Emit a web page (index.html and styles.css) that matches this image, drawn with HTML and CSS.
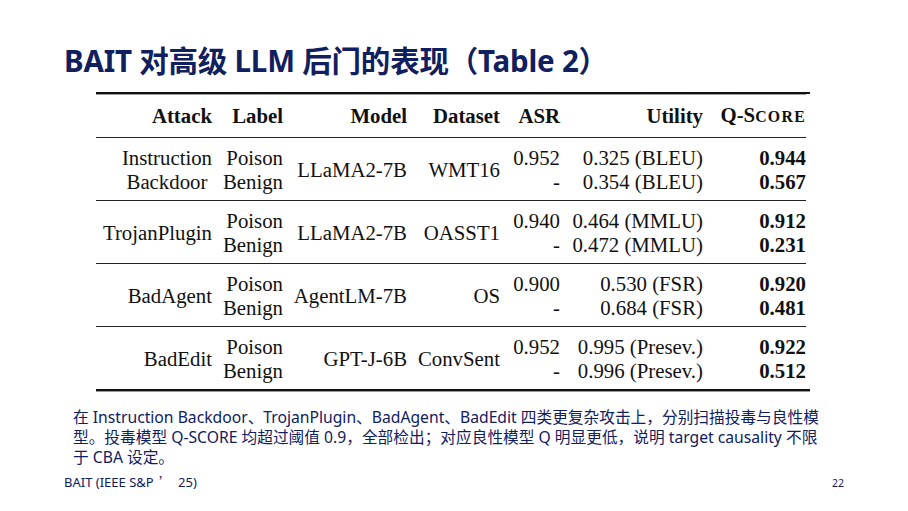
FILE: index.html
```html
<!DOCTYPE html>
<html lang="zh-CN">
<head>
<meta charset="utf-8">
<title>BAIT Table 2</title>
<link rel="stylesheet" href="styles.css">
</head>
<body>
<div class="slide">
  <h1 class="title">BAIT 对高级 LLM 后门的表现（Table 2）</h1>

  <div class="table">
    <div class="row head">
      <div class="c">Attack</div>
      <div class="c">Label</div>
      <div class="c">Model</div>
      <div class="c">Dataset</div>
      <div class="c">ASR</div>
      <div class="c">Utility</div>
      <div class="c">Q-S<span class="sc">CORE</span></div>
    </div>

    <div class="row">
      <div class="c"><span class="centered">Instruction<br>Backdoor</span></div>
      <div class="c two"><span>Poison</span><span>Benign</span></div>
      <div class="c">LLaMA2-7B</div>
      <div class="c">WMT16</div>
      <div class="c two"><span>0.952</span><span>-</span></div>
      <div class="c two"><span>0.325 (BLEU)</span><span>0.354 (BLEU)</span></div>
      <div class="c two bold"><span>0.944</span><span>0.567</span></div>
    </div>

    <div class="row">
      <div class="c">TrojanPlugin</div>
      <div class="c two"><span>Poison</span><span>Benign</span></div>
      <div class="c">LLaMA2-7B</div>
      <div class="c">OASST1</div>
      <div class="c two"><span>0.940</span><span>-</span></div>
      <div class="c two"><span>0.464 (MMLU)</span><span>0.472 (MMLU)</span></div>
      <div class="c two bold"><span>0.912</span><span>0.231</span></div>
    </div>

    <div class="row">
      <div class="c">BadAgent</div>
      <div class="c two"><span>Poison</span><span>Benign</span></div>
      <div class="c">AgentLM-7B</div>
      <div class="c">OS</div>
      <div class="c two"><span>0.900</span><span>-</span></div>
      <div class="c two"><span>0.530 (FSR)</span><span>0.684 (FSR)</span></div>
      <div class="c two bold"><span>0.920</span><span>0.481</span></div>
    </div>

    <div class="row last">
      <div class="c">BadEdit</div>
      <div class="c two"><span>Poison</span><span>Benign</span></div>
      <div class="c">GPT-J-6B</div>
      <div class="c">ConvSent</div>
      <div class="c two"><span>0.952</span><span>-</span></div>
      <div class="c two"><span>0.995 (Presev.)</span><span>0.996 (Presev.)</span></div>
      <div class="c two bold"><span>0.922</span><span>0.512</span></div>
    </div>
  </div>

  <p class="note">在 Instruction Backdoor、TrojanPlugin、BadAgent、BadEdit 四类更复杂攻击上，分别扫描投毒与良性模<br>型。投毒模型 Q-SCORE 均超过阈值 0.9，全部检出；对应良性模型 Q 明显更低，说明 target causality 不限<br>于 CBA 设定。</p>

  <div class="footer">
    <span class="source">BAIT (IEEE S&amp;P <span class="cjk">’</span>25)</span>
    <span class="page">22</span>
  </div>
</div>
</body>
</html>
```

FILE: styles.css
```css
html, body {
  margin: 0;
  padding: 0;
  background: #ffffff;
}

.slide {
  width: 908px;
  height: 511px;
  position: relative;
  overflow: hidden;
  padding-top: 42px;
  box-sizing: border-box;
  color: #10205f;
  font-family: "Noto Sans", "Noto Sans CJK SC", sans-serif;
}

.title {
  margin: 0 0 0 64px;
  font-size: 29.5px;
  line-height: 38px;
  font-weight: 700;
  color: #10205f;
  letter-spacing: -0.2px;
}

/* ---- table ---- */
.table {
  margin: 12px 0 0 96px;
  width: 714px;
  padding-right: 4px;
  box-sizing: border-box;
  font-family: "Liberation Serif", "Times New Roman", serif;
  font-size: 20.8px;
  line-height: 24px;
  color: #111111;
  border-top: 2px solid #111111;
  border-bottom: 2px solid #111111;
  box-shadow: 0 1px 0 #9a9a9a;
}

.row {
  display: grid;
  grid-template-columns: 116px 71px 124px 93px 60px 143px 103px;
  align-items: center;
  padding: 8px 0 6px;
  border-top: 1.6px solid #222222;
}

.row.head {
  border-top: 1px solid #9a9a9a;
  padding: 8px 0 8px;
  font-weight: 700;
}

.c {
  text-align: right;
  white-space: nowrap;
}

.two {
  display: flex;
  flex-direction: column;
  align-items: flex-end;
}

.bold {
  font-weight: 700;
}

.centered {
  display: inline-block;
  text-align: center;
}

.sc {
  font-size: 0.76em;
  letter-spacing: 1.3px;
}

/* ---- note ---- */
.note {
  margin: 16px 0 0 73px;
  font-size: 15.7px;
  line-height: 20px;
  white-space: nowrap;
  color: #10205f;
}

.footer {
  display: flex;
  justify-content: space-between;
  align-items: baseline;
  margin: 6px 64px 0 64px;
  color: #10205f;
}

.source {
  font-size: 13px;
  line-height: 18px;
}

.cjk {
  font-family: "Noto Sans CJK SC", sans-serif;
  display: inline-block;
  width: 21px;
  text-align: left;
  padding-left: 2px;
  box-sizing: border-box;
}

.page {
  font-size: 10.5px;
  margin-right: 0;
}
```
